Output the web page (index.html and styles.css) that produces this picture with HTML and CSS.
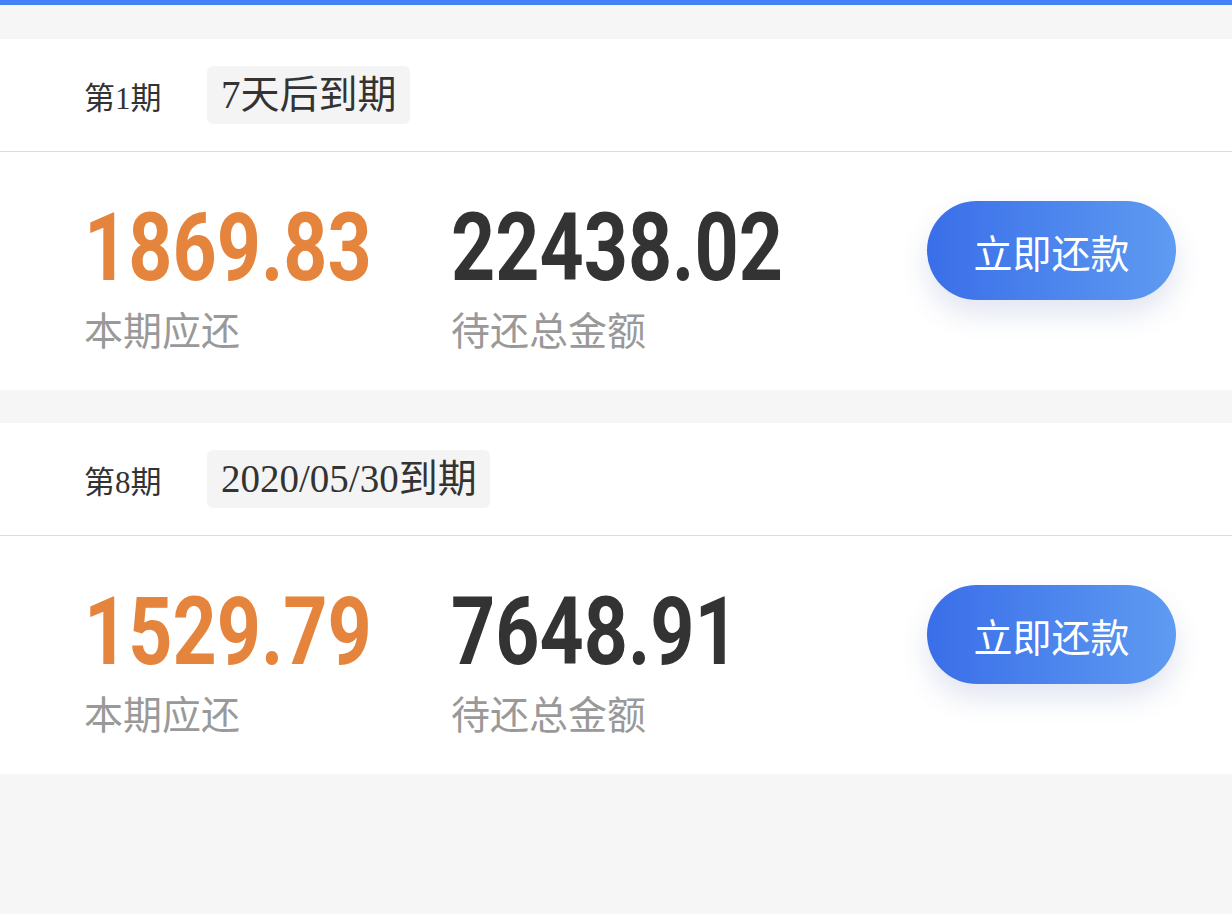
FILE: index.html
```html
<!DOCTYPE html>
<html lang="zh-CN">
<head>
    <meta charset="UTF-8">
    <meta name="viewport" content="width=device-width, initial-scale=1.0">
    <title>还款计划</title>
    <link rel="stylesheet" href="styles.css">
</head>
<body>
<div id="topbar"></div>
<div id="lista">
    <div class="card">
        <div class="card-head">
            <span class="periodo">第1期</span>
            <span class="tag">7天后到期</span>
        </div>
        <div class="card-body">
            <div class="coluna">
                <div class="valor laranja"><span>1869.83</span></div>
                <div class="rotulo">本期应还</div>
            </div>
            <div class="coluna">
                <div class="valor"><span>22438.02</span></div>
                <div class="rotulo">待还总金额</div>
            </div>
            <button class="pagar">立即还款</button>
        </div>
    </div>
    <div class="card">
        <div class="card-head">
            <span class="periodo">第8期</span>
            <span class="tag">2020/05/30到期</span>
        </div>
        <div class="card-body">
            <div class="coluna">
                <div class="valor laranja"><span>1529.79</span></div>
                <div class="rotulo">本期应还</div>
            </div>
            <div class="coluna">
                <div class="valor"><span>7648.91</span></div>
                <div class="rotulo">待还总金额</div>
            </div>
            <button class="pagar">立即还款</button>
        </div>
    </div>
</div>
</body>
</html>
```

FILE: styles.css
```css
body {
    margin: 0;
    background-color: #f6f6f6;
    font-family: "Noto Sans CJK SC", sans-serif;
    color: #333;
}

#topbar {
    height: 5px;
    background-color: #4680f6;
}

#lista {
    display: flex;
    flex-direction: column;
    gap: 33px;
    padding-top: 34px;
}

.card {
    background-color: white;
}

.card-head {
    height: 113px;
    display: flex;
    align-items: center;
    padding-left: 84px;
    border-bottom: 1px solid #dcdcdc;
    box-sizing: border-box;
}

.periodo {
    font-family: "Liberation Serif", "Noto Sans CJK SC", serif;
    font-size: 31px;
    color: #333;
    width: 123px;
}

.tag {
    font-family: "Liberation Serif", "Noto Sans CJK SC", serif;
    font-size: 39px;
    background-color: #f4f4f4;
    border-radius: 6px;
    padding: 6px 13px 6px 14px;
    line-height: 46px;
    color: #333;
}

.card-body {
    height: 238px;
    display: flex;
    align-items: flex-start;
    padding: 49px 56px 0 84px;
    box-sizing: border-box;
}

.coluna {
    width: 367px;
}

.valor {
    font-family: Roboto, "Liberation Sans", sans-serif;
    font-weight: bold;
    font-size: 94px;
    line-height: 94px;
    color: #333;
    white-space: nowrap;
}

.valor span {
    display: inline-block;
    transform: scaleX(0.82);
    transform-origin: left;
}

.laranja {
    color: #e5843c;
}

.rotulo {
    font-size: 39px;
    line-height: 44px;
    color: #999;
    margin-top: 11px;
}

.pagar {
    margin-left: auto;
    width: 249px;
    height: 99px;
    border: none;
    border-radius: 50px;
    background: linear-gradient(to right, #3a6ee9, #5e9bf1);
    color: white;
    font-family: "Noto Sans CJK SC", sans-serif;
    font-size: 39px;
    box-shadow: 0 14px 28px rgba(60, 80, 160, 0.15);
}
```
